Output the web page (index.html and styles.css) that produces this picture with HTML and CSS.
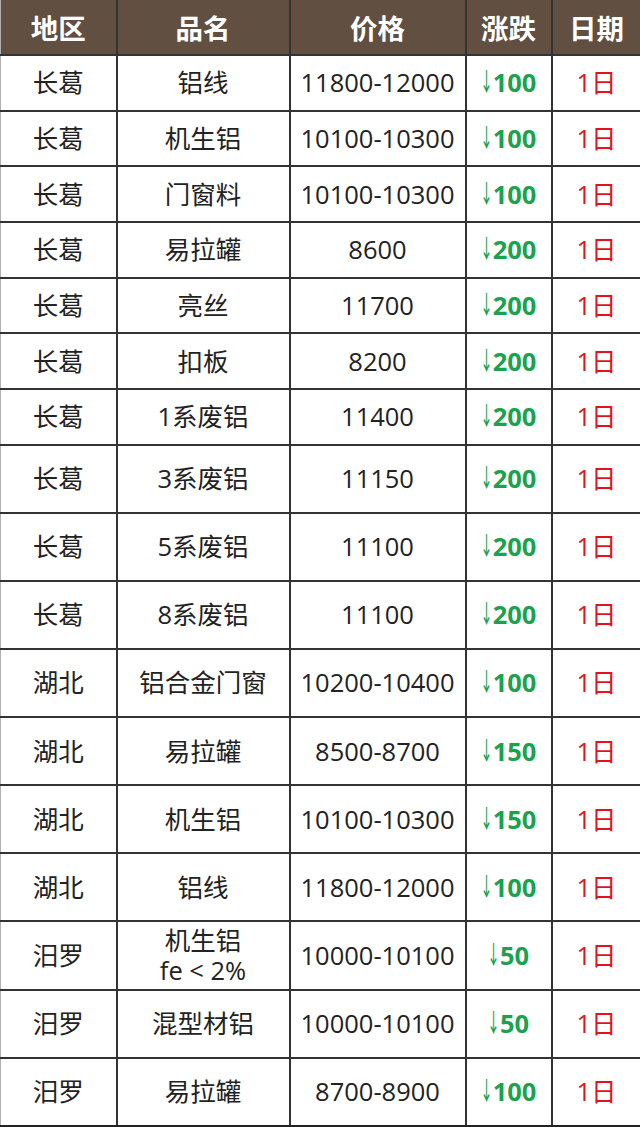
FILE: index.html
```html
<!DOCTYPE html>
<html lang="zh">
<head>
<meta charset="utf-8">
<title>价格表</title>
<link rel="stylesheet" href="styles.css">
</head>
<body>
<table class="price">
  <colgroup>
    <col class="c1"><col class="c2"><col class="c3"><col class="c4"><col class="c5">
  </colgroup>
  <thead>
    <tr class="head"><th>地区</th><th>品名</th><th>价格</th><th>涨跌</th><th>日期</th></tr>
  </thead>
  <tbody>
    <tr class="s"><td>长葛</td><td>铝线</td><td>11800-12000</td><td class="dn"><span class="ar">↓</span>100</td><td class="dt">1日</td></tr>
    <tr class="s"><td>长葛</td><td>机生铝</td><td>10100-10300</td><td class="dn"><span class="ar">↓</span>100</td><td class="dt">1日</td></tr>
    <tr class="s"><td>长葛</td><td>门窗料</td><td>10100-10300</td><td class="dn"><span class="ar">↓</span>100</td><td class="dt">1日</td></tr>
    <tr class="s"><td>长葛</td><td>易拉罐</td><td>8600</td><td class="dn"><span class="ar">↓</span>200</td><td class="dt">1日</td></tr>
    <tr class="s"><td>长葛</td><td>亮丝</td><td>11700</td><td class="dn"><span class="ar">↓</span>200</td><td class="dt">1日</td></tr>
    <tr class="s"><td>长葛</td><td>扣板</td><td>8200</td><td class="dn"><span class="ar">↓</span>200</td><td class="dt">1日</td></tr>
    <tr class="s"><td>长葛</td><td>1系废铝</td><td>11400</td><td class="dn"><span class="ar">↓</span>200</td><td class="dt">1日</td></tr>
    <tr class="t"><td>长葛</td><td>3系废铝</td><td>11150</td><td class="dn"><span class="ar">↓</span>200</td><td class="dt">1日</td></tr>
    <tr class="t"><td>长葛</td><td>5系废铝</td><td>11100</td><td class="dn"><span class="ar">↓</span>200</td><td class="dt">1日</td></tr>
    <tr class="t"><td>长葛</td><td>8系废铝</td><td>11100</td><td class="dn"><span class="ar">↓</span>200</td><td class="dt">1日</td></tr>
    <tr class="t"><td>湖北</td><td>铝合金门窗</td><td>10200-10400</td><td class="dn"><span class="ar">↓</span>100</td><td class="dt">1日</td></tr>
    <tr class="t"><td>湖北</td><td>易拉罐</td><td>8500-8700</td><td class="dn"><span class="ar">↓</span>150</td><td class="dt">1日</td></tr>
    <tr class="t"><td>湖北</td><td>机生铝</td><td>10100-10300</td><td class="dn"><span class="ar">↓</span>150</td><td class="dt">1日</td></tr>
    <tr class="t"><td>湖北</td><td>铝线</td><td>11800-12000</td><td class="dn"><span class="ar">↓</span>100</td><td class="dt">1日</td></tr>
    <tr class="t"><td>汨罗</td><td class="two">机生铝<br>fe &lt; 2%</td><td>10000-10100</td><td class="dn"><span class="ar">↓</span>50</td><td class="dt">1日</td></tr>
    <tr class="t"><td>汨罗</td><td>混型材铝</td><td>10000-10100</td><td class="dn"><span class="ar">↓</span>50</td><td class="dt">1日</td></tr>
    <tr class="t"><td>汨罗</td><td>易拉罐</td><td>8700-8900</td><td class="dn"><span class="ar">↓</span>100</td><td class="dt">1日</td></tr>
  </tbody>
</table>
</body>
</html>
```

FILE: styles.css
```css
html, body {
  margin: 0;
  padding: 0;
  background: #ffffff;
}

.price {
  width: 640px;
  table-layout: fixed;
  border-collapse: collapse;
  font-family: "Open Sans", "Noto Sans CJK SC", sans-serif;
  color: #222222;
}

.c1 { width: 116px; }
.c2 { width: 173px; }
.c3 { width: 176px; }
.c4 { width: 86px; }
.c5 { width: 89px; }

.price th,
.price td {
  border: 2px solid #333333;
  text-align: center;
  vertical-align: middle;
  padding: 0;
}

.price tr > :first-child { border-left: 1px solid #b0b0b0; }
.price tr > :last-child { border-right: none; }
.price tbody tr:last-child td { border-bottom: 2px solid #222222; }

.head th {
  height: 54px;
  background: #614f41;
  color: #ffffff;
  font-weight: 700;
  font-size: 27.5px;
  font-family: "Noto Sans CJK SC", sans-serif;
  border-top: none;
}

.price td {
  font-size: 25.5px;
  line-height: 1.15;
}

.s td { height: 53.7px; }
.t td { height: 66.1px; }

.two { line-height: 1.25; }

.dn {
  color: #1aa34e;
  font-weight: 700;
  font-family: "Open Sans", sans-serif;
}

.ar {
  display: inline-block;
  font-family: "Noto Sans CJK SC", sans-serif;
  font-weight: 500;
  font-size: 25px;
  line-height: 20px;
  height: 20px;
  vertical-align: baseline;
  transform: scaleX(0.5) translateY(-1px);
  margin: 0 -6px 0 -7px;
}

.dt {
  color: #e0141c;
}
```
